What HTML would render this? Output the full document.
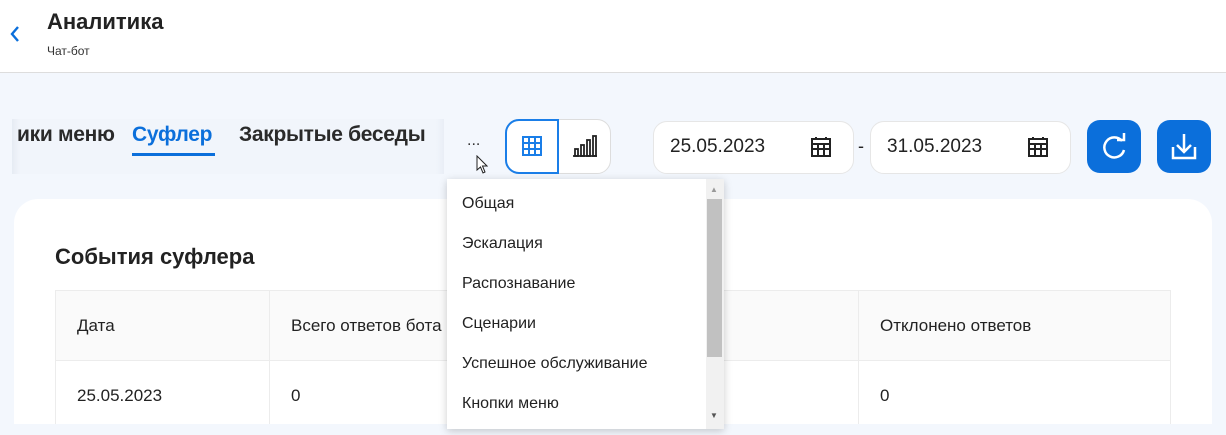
<!DOCTYPE html>
<html><head><meta charset="utf-8"><style>
*{box-sizing:border-box;margin:0;padding:0}
body{width:1226px;height:435px;overflow:hidden;background:#f3f7fd;font-family:"Liberation Sans",sans-serif;color:#222;position:relative}
.hdr{position:absolute;left:0;top:0;width:1226px;height:73px;background:#fff;border-bottom:1px solid #ddd}
.abs{position:absolute}
.tab{position:absolute;top:123px;font-size:21px;font-weight:bold;color:#2a2a2a;letter-spacing:-0.3px}
.date{position:absolute;top:121px;width:201px;height:53px;background:#fff;border:1px solid #e6e6e6;border-radius:14px;font-size:19px;padding:14px 0 0 16px;color:#222}
.btn{position:absolute;top:120px;width:54px;height:53px;background:#0b6fdb;border-radius:13px}
.card{position:absolute;left:14px;top:199px;width:1198px;height:225px;background:#fff;border-radius:24px 24px 0 0;overflow:hidden}
td{border:1px solid #ececec;font-size:17px;padding-left:21px;color:#222}
.dd{position:absolute;left:447px;top:179px;width:277px;height:250px;background:#fff;box-shadow:0 2px 8px rgba(0,0,0,.2)}
.dd div{position:absolute;left:15px;font-size:16px;color:#222}
</style></head><body>
<div class="hdr">
<svg class="abs" style="left:8px;top:24px" width="14" height="20" viewBox="0 0 14 20"><path d="M10 3 L4 10 L10 17" fill="none" stroke="#0b6fdb" stroke-width="2.4"/></svg>
<div class="abs" style="left:47px;top:9px;font-size:22px;font-weight:bold;color:#222">Аналитика</div>
<div class="abs" style="left:47px;top:44px;font-size:12px;color:#333">Чат-бот</div>
</div>
<div class="abs" style="left:12px;top:119px;width:432px;height:55px;background:linear-gradient(90deg,#e6ebf3 0,#f1f5fb 8px,#f1f5fb 424px,#e9eef6 432px)"></div>
<div class="tab" style="left:17px">ики меню</div>
<div class="tab" style="left:132px;color:#0b6fdb">Суфлер</div>
<div class="abs" style="left:132px;top:153px;width:83px;height:3px;background:#0b6fdb"></div>
<div class="tab" style="left:239px">Закрытые беседы</div>
<div class="abs" style="left:467px;top:132px;font-size:16px;color:#333">...</div>
<div class="abs" style="left:505px;top:119px;width:106px;height:55px;background:#fff;border:1px solid #ddd;border-radius:14px"></div>
<div class="abs" style="left:505px;top:119px;width:54px;height:55px;border:2px solid #1a7ee8;border-radius:14px 0 0 14px"></div>
<svg class="abs" style="left:521px;top:135px" width="22" height="22" viewBox="0 0 22 22"><g fill="none" stroke="#1a7ee8" stroke-width="2"><rect x="2" y="2" width="18" height="18"/><path d="M8 2V20M14 2V20M2 8H20M2 14H20"/></g></svg>
<svg class="abs" style="left:572px;top:134px" width="26" height="24" viewBox="0 0 26 24"><g fill="none" stroke="#222" stroke-width="1.8"><path d="M1 22H25"/><rect x="3" y="15" width="3" height="7"/><rect x="9" y="11" width="3" height="11"/><rect x="15" y="6" width="3" height="16"/><rect x="21" y="2" width="3" height="20"/></g></svg>
<div class="date" style="left:653px">25.05.2023</div>
<div class="date" style="left:870px">31.05.2023</div>
<div class="abs" style="left:858px;top:136px;font-size:18px">-</div>
<svg class="abs" style="left:810px;top:136px" width="22" height="22" viewBox="0 0 22 22"><g fill="none" stroke="#222" stroke-width="2"><rect x="2" y="3" width="18" height="17"/><path d="M2 8H20M2 13H20M8 8V20M14 8V20M6 1V4M16 1V4"/></g></svg>
<svg class="abs" style="left:1027px;top:136px" width="22" height="22" viewBox="0 0 22 22"><g fill="none" stroke="#222" stroke-width="2"><rect x="2" y="3" width="18" height="17"/><path d="M2 8H20M2 13H20M8 8V20M14 8V20M6 1V4M16 1V4"/></g></svg>
<div class="btn" style="left:1087px"><svg width="54" height="53" viewBox="0 0 54 53"><path d="M35 21 A10 10 0 1 0 37 30" fill="none" stroke="#fff" stroke-width="2.5"/><path d="M30 20H37V13" fill="none" stroke="#fff" stroke-width="2.5"/></svg></div>
<div class="btn" style="left:1157px"><svg width="54" height="53" viewBox="0 0 54 53"><g fill="none" stroke="#fff" stroke-width="2.5"><path d="M16 27V38H38V27M27 14V32M20 25L27 32L34 25"/></g></svg></div>
<div class="card">
<div class="abs" style="left:41px;top:45px;font-size:22px;font-weight:bold;color:#222">События суфлера</div>
<table class="abs" style="left:41px;top:91px;border-collapse:collapse;width:1116px">
<tr style="height:70px;background:#fafafa"><td style="width:214px">Дата</td><td style="width:296px">Всего ответов бота</td><td style="width:293px">Принято ответов</td><td>Отклонено ответов</td></tr>
<tr style="height:70px"><td>25.05.2023</td><td>0</td><td>0</td><td>0</td></tr>
</table>
</div>
<div class="dd">
<div style="top:16px">Общая</div>
<div style="top:56px">Эскалация</div>
<div style="top:96px">Распознавание</div>
<div style="top:136px">Сценарии</div>
<div style="top:176px">Успешное обслуживание</div>
<div style="top:216px">Кнопки меню</div>
<span class="abs" style="left:259px;top:0;width:18px;height:250px;background:#f1f1f1"></span>
<span class="abs" style="left:260px;top:20px;width:15px;height:158px;background:#c1c1c1"></span>
<span class="abs" style="left:263px;top:6px;font-size:8px;color:#999">▲</span>
<span class="abs" style="left:263px;top:232px;font-size:8px;color:#555">▼</span>
</div>
<svg class="abs" style="left:476px;top:155px" width="12" height="19" viewBox="0 0 12 19"><path d="M1 1V15L4.5 12L7 18L9 17L6.5 11H11Z" fill="#fff" stroke="#222" stroke-width="1"/></svg>
</body></html>
